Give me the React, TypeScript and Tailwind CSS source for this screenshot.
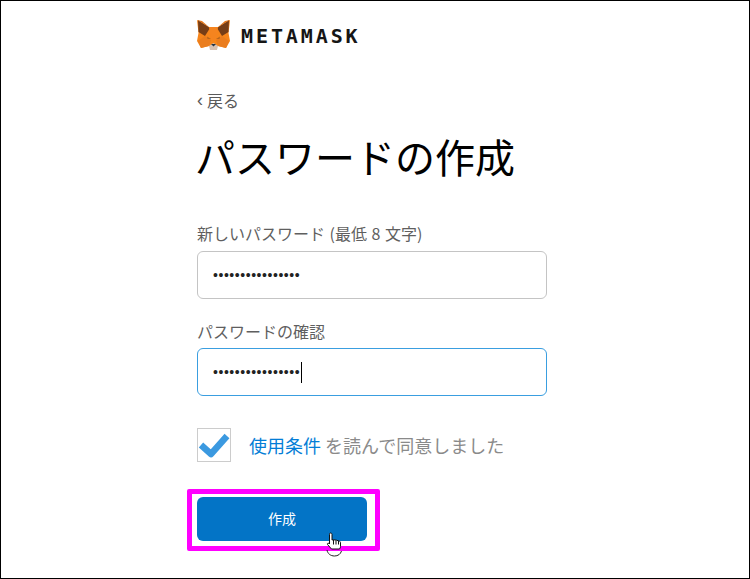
const FONT = "font-['Noto_Sans_CJK_JP','Liberation_Sans',sans-serif]";

function FoxLogo() {
  return (
    <svg width="33" height="31" viewBox="0 0 33 31" className="shrink-0">
      <polygon points="0,1 12,8 21,8 33,1 31.500,14 33,22 29,29 21,27 12,27 4,29 0,22 1.500,14" fill="#f6851b" />
      <polygon points="1,1 13,9 8,17 1.500,13" fill="#763d16" />
      <polygon points="32,1 20,9 25,17 31.500,13" fill="#763d16" />
      <polygon points="0,1 12,8 5,2" fill="#e2761b" />
      <polygon points="33,1 21,8 28,2" fill="#e2761b" />
      <polygon points="12,8 21,8 19,21 14,21" fill="#f5841f" />
      <polygon points="8,17 14,21 12,27 4,29 1,22" fill="#ea7d1e" />
      <polygon points="25,17 19,21 21,27 29,29 32,22" fill="#ea7d1e" />
      <polygon points="10,17.500 14,20 10.500,20" fill="#b5651d" />
      <polygon points="23,17.500 19,20 22.500,20" fill="#b5651d" />
      <polygon points="12,27 16.500,24 21,27 20,31 13,31" fill="#d7c1b3" />
      <polygon points="14,25 19,25 16.500,27.500" fill="#233447" />
    </svg>
  );
}

function HandCursor() {
  return (
    <svg width="19" height="26" viewBox="0 0 19 26" className="absolute left-[324px] top-[530px]">
      <path
        d="M5.500 2c.9 0 1.500.6 1.500 1.500V9l1.500-.3 1.500.3 1.500.2 1.500.5 1.500.5c.8.3 1 .8 1 1.500v3.800c0 1-.5 2-1 2.500H6.500L2.500 13.500c-.5-1 .5-1.700 1.500-1l.5.500V3.500C4.500 2.600 4.700 2 5.500 2z"
        fill="#fff"
        stroke="#111"
        strokeWidth="1"
      />
      <path d="M8.500 9v4.500M11 9.500v4M13.500 10v3.500" stroke="#111" strokeWidth="1" />
      <path d="M2 19c.5 3.500 3.500 6 7.500 6 3.500 0 6-1.800 7-5" fill="none" stroke="#222" strokeWidth="1" />
    </svg>
  );
}

export default function App() {
  return (
    <div className={`relative h-[579px] w-[750px] overflow-hidden border border-black bg-white pl-[196px] pt-[18px] ${FONT}`}>
      <div className="flex h-[31px] items-center gap-[11px]">
        <FoxLogo />
        <span className="pt-[3px] font-['DejaVu_Sans_Mono',monospace] text-[20px] font-bold leading-none tracking-[2.900px] text-[#161616]">
          METAMASK
        </span>
      </div>

      <div className="mt-[39px] flex h-[22px] items-center gap-[4px] text-[16px] leading-[22px] text-[#5a5a5a]">
        <span className="font-['Liberation_Sans',sans-serif] text-[18px] leading-none">‹</span>
        <span>戻る</span>
      </div>

      <h1 className="-ml-[2px] mt-[15px] text-[40px] font-normal leading-[60px] text-black">
        パスワードの作成
      </h1>

      <form className="mt-[36px] flex w-[350px] flex-col">
        <label className="text-[16px] leading-[22px] text-[#5f5f5f] [word-spacing:1px]">
          新しいパスワード (最低 8 文字)
        </label>
        <div className="mt-[7px] flex h-[48px] items-center rounded-[6px] border border-[#c4c4c4] pl-[15px] font-['Liberation_Sans',sans-serif] text-[14px] tracking-[0.550px] text-[#222]">
          ••••••••••••••••
        </div>
        <label className="mt-[21px] text-[16px] leading-[22px] text-[#5f5f5f]">
          パスワードの確認
        </label>
        <div className="mt-[6px] flex h-[48px] items-center rounded-[6px] border border-[#3a9ee0] pl-[15px] font-['Liberation_Sans',sans-serif] text-[14px] tracking-[0.550px] text-[#222]">
          ••••••••••••••••
          <span className="ml-px h-[21px] w-px bg-black" />
        </div>

        <div className="mt-[32px] flex items-center gap-[18px]">
          <div className="flex h-[34px] w-[34px] items-center justify-center border border-[#cccccc] bg-white">
            <svg width="32" height="26" viewBox="0 0 32 26">
              <path d="M3 13l10 9L29 4" fill="none" stroke="#3b99e0" strokeWidth="6.500" strokeLinejoin="round" />
            </svg>
          </div>
          <p className="text-[18px] leading-[24px] text-[#8a8a8a]">
            <span className="text-[#037dd6]">使用条件</span> を読んで同意しました
          </p>
        </div>

        <button
          type="button"
          className="mt-[35px] h-[44px] w-[170px] rounded-[6px] bg-[#0374c6] pb-[2px] text-[14px] text-white"
        >
          作成
        </button>
      </form>

      {/* annotation frame round the button */}
      <div className="absolute left-[186px] top-[488px] h-[62px] w-[193px] rounded-[2px] border-[5px] border-[#ff00ff]" />
      <HandCursor />
    </div>
  );
}
